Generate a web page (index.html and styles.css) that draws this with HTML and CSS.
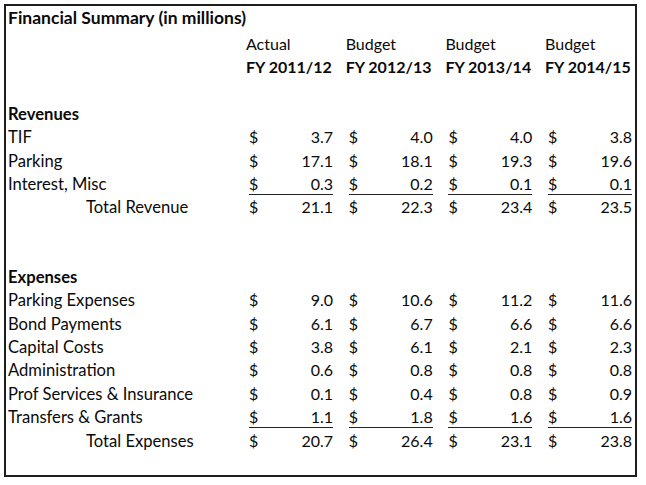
FILE: index.html
```html
<!DOCTYPE html>
<html>
<head>
<meta charset="utf-8">
<link rel="stylesheet" href="styles.css">
</head>
<body>
<div class="sheet">
  <div class="row title"><div class="label bold title-text">Financial Summary (in millions)</div></div>
  <div class="row"><div></div><div class="head">Actual</div><div class="head">Budget</div><div class="head">Budget</div><div class="head">Budget</div></div>
  <div class="row"><div></div><div class="head bold">FY 2011/12</div><div class="head bold">FY 2012/13</div><div class="head bold">FY 2013/14</div><div class="head bold">FY 2014/15</div></div>
  <div class="row"></div>
  <div class="row"><div class="label bold">Revenues</div></div>
  <div class="row"><div class="label">TIF</div>
    <div class="amt"><span class="in"><span>$</span><span>3.7</span></span></div>
    <div class="amt"><span class="in"><span>$</span><span>4.0</span></span></div>
    <div class="amt"><span class="in"><span>$</span><span>4.0</span></span></div>
    <div class="amt"><span class="in"><span>$</span><span>3.8</span></span></div></div>
  <div class="row"><div class="label">Parking</div>
    <div class="amt"><span class="in"><span>$</span><span>17.1</span></span></div>
    <div class="amt"><span class="in"><span>$</span><span>18.1</span></span></div>
    <div class="amt"><span class="in"><span>$</span><span>19.3</span></span></div>
    <div class="amt"><span class="in"><span>$</span><span>19.6</span></span></div></div>
  <div class="row"><div class="label">Interest, Misc</div>
    <div class="amt"><span class="in ul"><span>$</span><span>0.3</span></span></div>
    <div class="amt"><span class="in ul"><span>$</span><span>0.2</span></span></div>
    <div class="amt"><span class="in ul"><span>$</span><span>0.1</span></span></div>
    <div class="amt"><span class="in ul"><span>$</span><span>0.1</span></span></div></div>
  <div class="row"><div class="label total">Total Revenue</div>
    <div class="amt"><span class="in"><span>$</span><span>21.1</span></span></div>
    <div class="amt"><span class="in"><span>$</span><span>22.3</span></span></div>
    <div class="amt"><span class="in"><span>$</span><span>23.4</span></span></div>
    <div class="amt"><span class="in"><span>$</span><span>23.5</span></span></div></div>
  <div class="row"></div>
  <div class="row gap-short"></div>
  <div class="row"><div class="label bold">Expenses</div></div>
  <div class="row"><div class="label">Parking Expenses</div>
    <div class="amt"><span class="in"><span>$</span><span>9.0</span></span></div>
    <div class="amt"><span class="in"><span>$</span><span>10.6</span></span></div>
    <div class="amt"><span class="in"><span>$</span><span>11.2</span></span></div>
    <div class="amt"><span class="in"><span>$</span><span>11.6</span></span></div></div>
  <div class="row"><div class="label">Bond Payments</div>
    <div class="amt"><span class="in"><span>$</span><span>6.1</span></span></div>
    <div class="amt"><span class="in"><span>$</span><span>6.7</span></span></div>
    <div class="amt"><span class="in"><span>$</span><span>6.6</span></span></div>
    <div class="amt"><span class="in"><span>$</span><span>6.6</span></span></div></div>
  <div class="row"><div class="label">Capital Costs</div>
    <div class="amt"><span class="in"><span>$</span><span>3.8</span></span></div>
    <div class="amt"><span class="in"><span>$</span><span>6.1</span></span></div>
    <div class="amt"><span class="in"><span>$</span><span>2.1</span></span></div>
    <div class="amt"><span class="in"><span>$</span><span>2.3</span></span></div></div>
  <div class="row"><div class="label">Administration</div>
    <div class="amt"><span class="in"><span>$</span><span>0.6</span></span></div>
    <div class="amt"><span class="in"><span>$</span><span>0.8</span></span></div>
    <div class="amt"><span class="in"><span>$</span><span>0.8</span></span></div>
    <div class="amt"><span class="in"><span>$</span><span>0.8</span></span></div></div>
  <div class="row"><div class="label">Prof Services &amp; Insurance</div>
    <div class="amt"><span class="in"><span>$</span><span>0.1</span></span></div>
    <div class="amt"><span class="in"><span>$</span><span>0.4</span></span></div>
    <div class="amt"><span class="in"><span>$</span><span>0.8</span></span></div>
    <div class="amt"><span class="in"><span>$</span><span>0.9</span></span></div></div>
  <div class="row"><div class="label">Transfers &amp; Grants</div>
    <div class="amt"><span class="in ul"><span>$</span><span>1.1</span></span></div>
    <div class="amt"><span class="in ul"><span>$</span><span>1.8</span></span></div>
    <div class="amt"><span class="in ul"><span>$</span><span>1.6</span></span></div>
    <div class="amt"><span class="in ul"><span>$</span><span>1.6</span></span></div></div>
  <div class="row"><div class="label total">Total Expenses</div>
    <div class="amt"><span class="in"><span>$</span><span>20.7</span></span></div>
    <div class="amt"><span class="in"><span>$</span><span>26.4</span></span></div>
    <div class="amt"><span class="in"><span>$</span><span>23.1</span></span></div>
    <div class="amt"><span class="in"><span>$</span><span>23.8</span></span></div></div>
</div>
</body>
</html>
```

FILE: styles.css
```css
html, body {
  margin: 0;
  padding: 0;
  background: #ffffff;
}
.sheet {
  margin: 4px;
  width: 633px;
  height: 473px;
  box-sizing: border-box;
  border: 2px solid #1e1e1e;
  font-family: Lato, "Open Sans", sans-serif;
  font-size: 16px;
  line-height: 20px;
  color: #0a0a0a;
  display: flex;
  flex-direction: column;
}
.row {
  display: grid;
  grid-template-columns: 240px 99.7px 99.7px 99.7px 1fr;
  height: 23.4px;
  align-items: center;
  flex: none;
}
.row.title {
  height: 24px;
  padding-bottom: 2px;
}
.row.gap-short {
  height: 22.6px;
}
.bold {
  font-weight: 700;
}
.label {
  padding-left: 2px;
  white-space: nowrap;
  font-size: 16.6px;
}
.label.title-text {
  font-size: 17.5px;
}
.label.total {
  padding-left: 80px;
}
.head {
  white-space: nowrap;
}
.amt {
  padding-left: 3px;
}
.in {
  display: flex;
  justify-content: space-between;
  width: 84px;
}
.in.ul {
  border-bottom: 1px solid #222;
  margin-bottom: -1px;
}
```
